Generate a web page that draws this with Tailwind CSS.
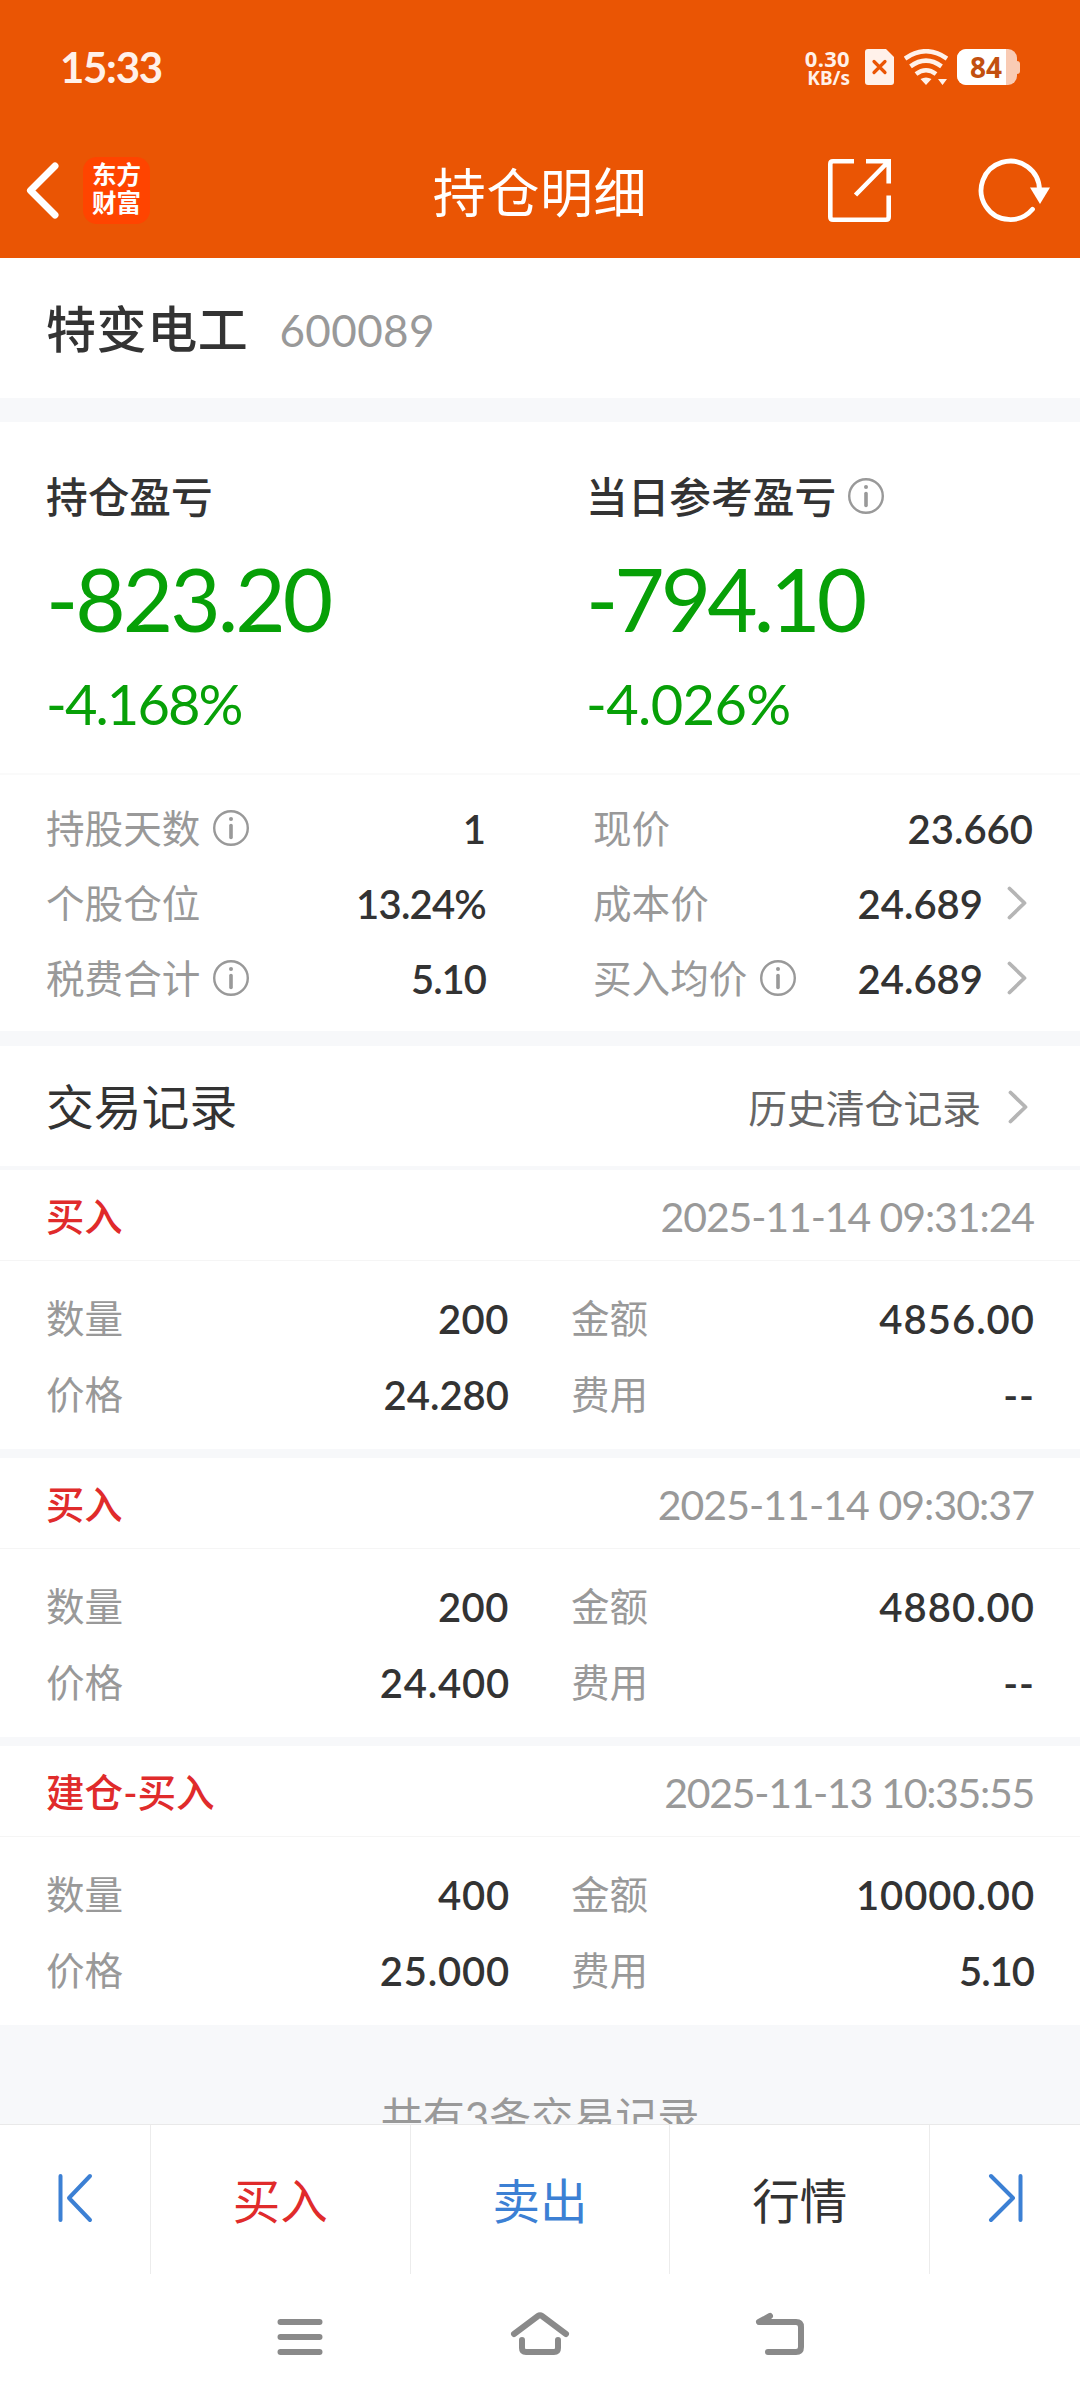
<!DOCTYPE html>
<html lang="zh-CN">
<head>
<meta charset="utf-8">
<title>持仓明细</title>
<script src="https://cdn.jsdelivr.net/npm/@tailwindcss/browser@4"></script>
</head>
<body class="w-[1080px] h-[2400px] overflow-hidden flex flex-col bg-white text-[#333] font-['Lato','Noto_Sans_CJK_SC',sans-serif]">
<svg class="hidden">
  <symbol id="info" viewBox="0 0 36 36"><circle cx="18" cy="18" r="16.8" fill="none" stroke="#999" stroke-width="2.4"/><circle cx="18" cy="9" r="2" fill="#999"/><path d="M18 15.500V27.500" stroke="#999" stroke-width="3.600" stroke-linecap="round"/></symbol>
  <symbol id="chev" viewBox="0 0 20 34"><path d="M2.500 2.500L17.500 17L2.500 31.500" fill="none" stroke="#b5b5b5" stroke-width="3.800" stroke-linecap="round" stroke-linejoin="round"/></symbol>
</svg>

<header class="h-[258px] shrink-0 bg-[#ea5504] text-white flex flex-col">
  <div class="h-[134px] flex items-center pl-[60px] pr-[60px]">
    <div class="text-[42px] font-bold tracking-[-1.300px] text-[#fff1ea]">15:33</div>
    <div class="ml-auto flex items-center">
      <div class="flex flex-col items-end font-['Noto_Sans'] font-bold text-[#fff1ea] mr-[15px]">
        <span class="text-[22px] leading-[22px] tracking-[0.3px]">0.30</span>
        <span class="text-[19px] leading-[18px]">KB/s</span>
      </div>
      <svg class="w-[29px] h-[36px]" viewBox="0 0 29 36"><path d="M3 0H21L29 8V33Q29 36 26 36H3Q0 36 0 33V3Q0 0 3 0Z" fill="#fff1ea"/><path d="M9 12.500L20 23.500M20 12.500L9 23.500" stroke="#ea5504" stroke-width="3.200" stroke-linecap="round"/></svg>
      <svg class="w-[44px] h-[36px] ml-[10px]" viewBox="0 0 44 36"><g fill="none" stroke="#fff1ea" stroke-width="4.600"><path d="M1 9.500Q22 -5 43 9.500"/><path d="M6.500 17.300Q22 6 37.500 17.300"/><path d="M12 25Q22 17.500 32 25"/></g><path d="M16.500 30Q22 27 27.500 30L22 36ZM34 30H43L38.500 36Z" fill="#fff1ea"/></svg>
      <div class="ml-[9px] flex items-center">
        <div class="w-[60px] h-[36px] rounded-[9px] overflow-hidden bg-[#f9cbb4] flex">
          <div class="w-[49px] bg-white text-[#c2500f] font-['Noto_Sans'] font-bold text-[28px] leading-[36px] pl-[13px]">84</div>
        </div>
        <div class="w-[3px] h-[13px] bg-[#f9cbb4] rounded-r-[3px]"></div>
      </div>
    </div>
  </div>
  <div class="h-[112px] grid grid-cols-3 items-center">
    <div class="flex items-center">
      <svg class="w-[36px] h-[60px] ml-[24px]" viewBox="0 0 36 60"><path d="M31 6L6.500 30.500L31 55" fill="none" stroke="#fff" stroke-width="7" stroke-linecap="round" stroke-linejoin="round"/></svg>
      <div class="ml-[23px] w-[67px] h-[67px] rounded-[14px] bg-[#ff4400] flex flex-col items-center justify-center text-[24.500px] leading-[28px] font-bold pb-[3px]"><span>东方</span><span>财富</span></div>
    </div>
    <h1 class="text-[53px] tracking-[0.6px] text-center leading-none pt-[4px]">持仓明细</h1>
    <div class="flex items-center justify-end pr-[28px]">
      <svg class="w-[63px] h-[63px] mr-[87px]" viewBox="0 0 63 63" fill="none" stroke="#fff" stroke-width="4.600"><path d="M26 2.300H5Q2.300 2.300 2.300 5V58Q2.300 60.700 5 60.700H58Q60.700 60.700 60.700 58V36.500M38 2.300H60.700V24.500M60 3L27.500 36"/></svg>
      <svg class="w-[74px] h-[66px]" viewBox="0 0 74 66"><path d="M61.500 33A29.200 29.200 0 1 0 54.500 52.300" fill="none" stroke="#fff" stroke-width="4.800" stroke-linecap="round"/><path d="M52 30.500H72L62 47Z" fill="#fff"/></svg>
    </div>
  </div>
</header>

<main class="h-[1866px] shrink-0 overflow-hidden bg-[#f7f8fa]">
  <section class="h-[140px] bg-white flex items-center px-[46px] pt-[3px] gap-[31px]">
    <h2 class="text-[50px] font-medium tracking-[0.6px]">特变电工</h2><span class="text-[44px] tracking-[0.4px] text-[#999]">600089</span>
  </section>

  <section class="mt-[24px] h-[353px] bg-white grid grid-cols-2 px-[46px] pt-[45px] border-b-2 border-[#fafafa]">
    <div>
      <div class="h-[60px] flex items-center text-[41.700px] font-medium">持仓盈亏</div>
      <div class="h-[142px] flex items-center text-[87px] leading-none tracking-[-3px] text-[#07a007]">-823.20</div>
      <div class="h-[70px] flex items-center text-[56px] leading-none tracking-[-1.900px] text-[#07a007] ">-4.168%</div>
    </div>
    <div class="pl-[46px]">
      <div class="h-[60px] flex items-center text-[41.700px] font-medium">当日参考盈亏<svg class="w-[36px] h-[36px] ml-[12px] mb-[3px]"><use href="#info"/></svg></div>
      <div class="h-[142px] flex items-center text-[87px] leading-none tracking-[-4px] text-[#07a007]">-794.10</div>
      <div class="h-[70px] flex items-center text-[56px] leading-none tracking-[-0.6px] text-[#07a007]">-4.026%</div>
    </div>
  </section>

  <section class="h-[256px] bg-white grid grid-cols-[440px_440px] gap-x-[107px] auto-rows-[75px] pl-[46px] pt-[16px] text-[38.600px] text-[#999] items-center">
    <div class="flex items-center">持股天数<svg class="w-[36px] h-[36px] ml-[13px] mb-[2px]"><use href="#info"/></svg><b class="ml-auto font-semibold text-[40px] text-[#333]">1</b></div>
    <div class="flex items-center">现价<b class="ml-auto font-semibold text-[40px] text-[#333]">23.660</b></div>
    <div class="flex items-center">个股仓位<b class="ml-auto font-semibold text-[40px] tracking-[-0.8px] text-[#333]">13.24%</b></div>
    <div class="flex items-center">成本价<b class="ml-auto font-semibold text-[40px] text-[#333]">24.689</b><svg class="w-[20px] h-[34px] ml-[24px] mr-[6px] mb-[2px]"><use href="#chev"/></svg></div>
    <div class="flex items-center">税费合计<svg class="w-[36px] h-[36px] ml-[13px] mb-[2px]"><use href="#info"/></svg><b class="ml-auto font-semibold text-[40px] tracking-[-1px] text-[#333]">5.10</b></div>
    <div class="flex items-center">买入均价<svg class="w-[36px] h-[36px] ml-[13px] mb-[2px]"><use href="#info"/></svg><b class="ml-auto font-semibold text-[40px] text-[#333]">24.689</b><svg class="w-[20px] h-[34px] ml-[24px] mr-[6px] mb-[2px]"><use href="#chev"/></svg></div>
  </section>

  <section class="mt-[15px] h-[120px] bg-white flex items-center pl-[46px] pr-[52px] pt-[2px]">
    <h2 class="text-[47.800px]">交易记录</h2>
    <span class="ml-auto pt-[3px] text-[38.800px] text-[#666]">历史清仓记录</span><svg class="w-[20px] h-[34px] ml-[27px]"><use href="#chev"/></svg>
  </section>

  <section class="mt-[4px] h-[279px] bg-white">
    <div class="h-[91px] pt-[3px] border-b border-[#f5f5f5] flex items-center justify-between pl-[46px] pr-[46px]"><span class="text-[38.300px] font-medium text-[#e02b2b]">买入</span><time class="text-[41px] tracking-[-1.100px] text-[#999]">2025-11-14 09:31:24</time></div>
    <div class="grid grid-cols-[463px_463px] gap-x-[62px] auto-rows-[76px] pl-[46px] pt-[20px] text-[38.600px] text-[#999] items-center">
      <div class="flex items-center justify-between">数量<b class="font-semibold text-[40px] tracking-[0.5px] text-[#333]">200</b></div>
      <div class="flex items-center justify-between">金额<b class="font-semibold text-[40px] tracking-[1px] mr-[-1px] text-[#333]">4856.00</b></div>
      <div class="flex items-center justify-between">价格<b class="font-semibold text-[40px] text-[#333]">24.280</b></div>
      <div class="flex items-center justify-between">费用<b class="font-semibold text-[40px] tracking-[1px] mr-[-1px] text-[#333]">--</b></div>
    </div>
  </section>

  <section class="mt-[9px] h-[279px] bg-white">
    <div class="h-[91px] pt-[3px] border-b border-[#f5f5f5] flex items-center justify-between pl-[46px] pr-[46px]"><span class="text-[38.300px] font-medium text-[#e02b2b]">买入</span><time class="text-[41px] tracking-[-0.95px] text-[#999]">2025-11-14 09:30:37</time></div>
    <div class="grid grid-cols-[463px_463px] gap-x-[62px] auto-rows-[76px] pl-[46px] pt-[20px] text-[38.600px] text-[#999] items-center">
      <div class="flex items-center justify-between">数量<b class="font-semibold text-[40px] tracking-[0.5px] text-[#333]">200</b></div>
      <div class="flex items-center justify-between">金额<b class="font-semibold text-[40px] tracking-[1px] mr-[-1px] text-[#333]">4880.00</b></div>
      <div class="flex items-center justify-between">价格<b class="font-semibold text-[40px] tracking-[0.8px] mr-[-1px] text-[#333]">24.400</b></div>
      <div class="flex items-center justify-between">费用<b class="font-semibold text-[40px] tracking-[1px] mr-[-1px] text-[#333]">--</b></div>
    </div>
  </section>

  <section class="mt-[9px] h-[279px] bg-white">
    <div class="h-[91px] pt-[3px] border-b border-[#f5f5f5] flex items-center justify-between pl-[46px] pr-[46px]"><span class="text-[38.600px] font-medium text-[#e02b2b]">建仓-买入</span><time class="text-[41px] tracking-[-1.300px] text-[#999]">2025-11-13 10:35:55</time></div>
    <div class="grid grid-cols-[463px_463px] gap-x-[62px] auto-rows-[76px] pl-[46px] pt-[20px] text-[38.600px] text-[#999] items-center">
      <div class="flex items-center justify-between">数量<b class="font-semibold text-[40px] tracking-[0.8px] mr-[-1px] text-[#333]">400</b></div>
      <div class="flex items-center justify-between">金额<b class="font-semibold text-[40px] tracking-[0.9px] mr-[-1px] text-[#333]">10000.00</b></div>
      <div class="flex items-center justify-between">价格<b class="font-semibold text-[40px] tracking-[0.8px] mr-[-1px] text-[#333]">25.000</b></div>
      <div class="flex items-center justify-between">费用<b class="font-semibold text-[40px] tracking-[-1px] text-[#333]">5.10</b></div>
    </div>
  </section>

  <p class="pt-[71px] text-center text-[42px] leading-[42px] text-[#999] whitespace-nowrap">共有3条交易记录</p>
</main>

<nav class="h-[150px] shrink-0 bg-white border-t border-[#e9e9e9] grid grid-cols-[151px_1fr_1fr_1fr_150px] divide-x divide-[#ececec] text-[47.500px]">
  <a class="flex items-center"><svg class="w-[40px] h-[50px] ml-[56px] mb-[4px]" viewBox="0 0 40 50" fill="none" stroke="#3c80d4" stroke-width="4" stroke-linecap="round" stroke-linejoin="round"><path d="M4.500 3V47M34 3L13 25L34 47"/></svg></a>
  <a class="flex items-center justify-center pt-[2px] text-[#e02b2b]">买入</a>
  <a class="flex items-center justify-center pt-[2px] text-[#3c80d4]">卖出</a>
  <a class="flex items-center justify-center pt-[2px]">行情</a>
  <a class="flex items-center"><svg class="w-[40px] h-[50px] ml-[56px] mb-[4px]" viewBox="0 0 40 50" fill="none" stroke="#3c80d4" stroke-width="4" stroke-linecap="round" stroke-linejoin="round"><path d="M34.500 3V47M5 3L27 25L5 47"/></svg></a>
</nav>

<footer class="h-[126px] bg-white flex items-center justify-center gap-[180px]">
  <svg class="w-[60px] h-[60px]" viewBox="0 0 60 60" stroke="#8a8a8a" stroke-width="6" stroke-linecap="round"><path d="M10.500 15H49.500M10.500 30H49.500M10.500 45H49.500"/></svg>
  <svg class="w-[60px] h-[60px]" viewBox="0 0 60 60" fill="none" stroke="#8a8a8a" stroke-width="6" stroke-linecap="round" stroke-linejoin="round"><path d="M4 27L28 9Q30 7.500 32 9L56 27M12 33V41Q12 45 16 45H44Q48 45 48 41V33"/></svg>
  <svg class="w-[60px] h-[60px]" viewBox="0 0 60 60" fill="none" stroke="#8a8a8a" stroke-width="6" stroke-linecap="round" stroke-linejoin="round"><path d="M20 9L9 15H46Q51 15 51 20V40Q51 45 46 45H18"/></svg>
</footer>
</body>
</html>
